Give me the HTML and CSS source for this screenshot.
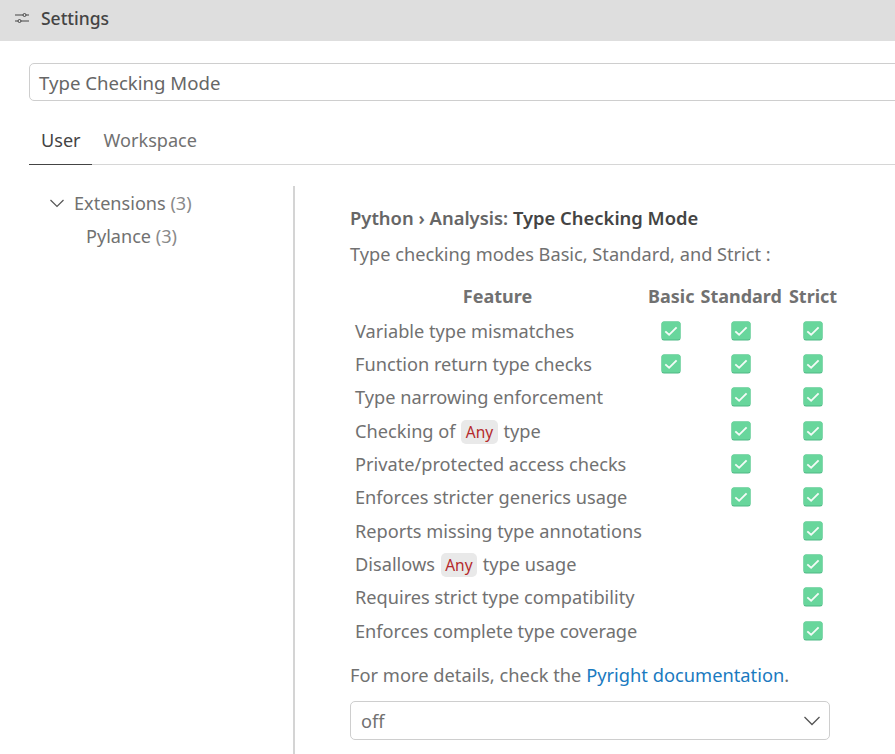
FILE: index.html
```html
<!DOCTYPE html>
<html lang="en">

<head>
    <meta charset="UTF-8" />
    <title>Settings</title>
    <link rel="stylesheet" href="styles.css">
</head>

<body>
    <svg class="defs" width="0" height="0">
        <symbol id="check" viewBox="0 0 20 20">
            <rect x="0.5" y="0.5" width="19" height="19" rx="2.5" fill="#4fb985" />
            <rect x="0.5" y="0.5" width="19" height="18" rx="2.5" fill="#68d69c" />
            <path d="M4.3 10.400l3.800 3.400 7.500-7.500" fill="none" stroke="#f4fbf7" stroke-width="1.9" />
        </symbol>
    </svg>

    <div class="titlebar">
        <svg class="settings-icon" width="16" height="16" viewBox="0 0 16 16" fill="none" stroke="#444" stroke-width="1">
            <path d="M1 5h8M12 5h3M1 11h3M7 11h8" />
            <circle cx="10.5" cy="5" r="1.5" />
            <circle cx="5.5" cy="11" r="1.5" />
        </svg>
        <span>Settings</span>
    </div>

    <div class="content">
        <div class="search">Type Checking Mode</div>

        <div class="tabs">
            <div class="tab active">User</div>
            <div class="tab">Workspace</div>
        </div>

        <div class="columns">
            <div class="tree">
                <div class="tree-row">
                    <svg width="16" height="16" viewBox="0 0 16 16" fill="none" stroke="#555" stroke-width="1.2">
                        <path d="M1.5 5l6.5 6.500 6.500-6.500" />
                    </svg>
                    <span>Extensions <span class="count">(3)</span></span>
                </div>
                <div class="tree-row child">Pylance <span class="count">(3)</span></div>
            </div>

            <div class="setting">
                <div class="setting-title">Python › Analysis: <b>Type Checking Mode</b></div>
                <p class="desc">Type checking modes Basic, Standard, and Strict :</p>

                <table>
                    <thead>
                        <tr>
                            <th class="feature">Feature</th>
                            <th>Basic</th>
                            <th>Standard</th>
                            <th>Strict</th>
                        </tr>
                    </thead>
                    <tbody>
                        <tr>
                            <td>Variable type mismatches</td>
                            <td><svg class="tick"><use href="#check" /></svg></td>
                            <td><svg class="tick"><use href="#check" /></svg></td>
                            <td><svg class="tick"><use href="#check" /></svg></td>
                        </tr>
                        <tr>
                            <td>Function return type checks</td>
                            <td><svg class="tick"><use href="#check" /></svg></td>
                            <td><svg class="tick"><use href="#check" /></svg></td>
                            <td><svg class="tick"><use href="#check" /></svg></td>
                        </tr>
                        <tr>
                            <td>Type narrowing enforcement</td>
                            <td></td>
                            <td><svg class="tick"><use href="#check" /></svg></td>
                            <td><svg class="tick"><use href="#check" /></svg></td>
                        </tr>
                        <tr>
                            <td>Checking of <code>Any</code> type</td>
                            <td></td>
                            <td><svg class="tick"><use href="#check" /></svg></td>
                            <td><svg class="tick"><use href="#check" /></svg></td>
                        </tr>
                        <tr>
                            <td>Private/protected access checks</td>
                            <td></td>
                            <td><svg class="tick"><use href="#check" /></svg></td>
                            <td><svg class="tick"><use href="#check" /></svg></td>
                        </tr>
                        <tr>
                            <td>Enforces stricter generics usage</td>
                            <td></td>
                            <td><svg class="tick"><use href="#check" /></svg></td>
                            <td><svg class="tick"><use href="#check" /></svg></td>
                        </tr>
                        <tr>
                            <td>Reports missing type annotations</td>
                            <td></td>
                            <td></td>
                            <td><svg class="tick"><use href="#check" /></svg></td>
                        </tr>
                        <tr>
                            <td>Disallows <code>Any</code> type usage</td>
                            <td></td>
                            <td></td>
                            <td><svg class="tick"><use href="#check" /></svg></td>
                        </tr>
                        <tr>
                            <td>Requires strict type compatibility</td>
                            <td></td>
                            <td></td>
                            <td><svg class="tick"><use href="#check" /></svg></td>
                        </tr>
                        <tr>
                            <td>Enforces complete type coverage</td>
                            <td></td>
                            <td></td>
                            <td><svg class="tick"><use href="#check" /></svg></td>
                        </tr>
                    </tbody>
                </table>

                <p class="more">For more details, check the <a href="#">Pyright documentation</a>.</p>

                <div class="select">
                    <span>off</span>
                    <svg width="18" height="18" viewBox="0 0 18 18" fill="none" stroke="#555" stroke-width="1.300">
                        <path d="M1.500 5l7.500 7.500 7.500-7.500" />
                    </svg>
                </div>
            </div>
        </div>
    </div>
</body>

</html>
```

FILE: styles.css
```css
html,
body {
    height: 100%;
}

body {
    margin: 0;
    overflow: hidden;
    background-color: #fff;
    color: #717171;
    font-family: "Noto Sans", "Open Sans", sans-serif;
    font-size: 18.2px;
}

.defs {
    position: absolute;
}

.titlebar {
    display: flex;
    align-items: center;
    gap: 11px;
    height: 41px;
    padding: 0 0 6px 14px;
    box-sizing: border-box;
    background-color: #dedede;
    color: #444;
    font-size: 17.5px;
    font-weight: 500;
}

.content {
    padding: 22px 0 0 29px;
}

.search {
    width: 900px;
    height: 38px;
    box-sizing: border-box;
    padding: 0 9px;
    border: 1px solid #cecece;
    border-radius: 5px;
    font-size: 18.6px;
    line-height: 38px;
    color: #666;
}

.tabs {
    display: flex;
    margin-top: 20px;
    height: 43px;
    border-bottom: 1px solid #d6d6d6;
    font-size: 18.1px;
}

.tab {
    padding: 0 12px;
    line-height: 38px;
    height: 44px;
    box-sizing: border-box;
}

.tab.active {
    padding-right: 11px;
    color: #444;
    border-bottom: 1px solid #444;
}

.columns {
    display: flex;
    margin-top: 21px;
}

.tree {
    width: 264px;
    flex-shrink: 0;
    font-size: 18.1px;
}

.tree-row {
    display: flex;
    align-items: center;
    gap: 9px;
    height: 33px;
    padding-left: 20px;
}

.tree-row.child {
    display: block;
    padding-left: 57px;
    line-height: 34px;
}

.count {
    color: #8a8a8a;
}

.setting {
    flex: 1;
    height: 568px;
    padding: 19px 0 0 55px;
    border-left: 2px solid #d4d4d4;
}

.setting-title {
    line-height: 26px;
    font-size: 18.4px;
    font-weight: 600;
    color: #666;
}

.setting-title b {
    color: #444;
    font-weight: 600;
}

.desc {
    margin: 10px 0 0;
    line-height: 26px;
}

table {
    margin-top: 11px;
    border-collapse: collapse;
}

th,
td {
    height: 33.35px;
    padding: 0 3px;
    text-align: center;
}

th {
    height: 36px;
    font-size: 18px;
    font-weight: 700;
}

th:last-child,
td:last-child {
    padding-left: 4px;
}

td:first-child {
    padding-left: 5px;
    text-align: left;
    white-space: nowrap;
}

td:first-child,
th.feature {
    width: 287px;
}

.tick {
    display: block;
    width: 20px;
    height: 20px;
    margin: 0 auto;
}

code {
    margin: 0 1px;
    padding: 1px 4.5px;
    border-radius: 5px;
    background-color: #e9e9e9;
    color: #b5292c;
    font-family: inherit;
    font-size: 15.500px;
}

.more {
    margin: 15px 0 0;
    font-size: 18.3px;
    line-height: 26px;
}

.more a {
    color: #1a7abf;
    text-decoration: none;
}

.select {
    display: flex;
    align-items: center;
    justify-content: space-between;
    width: 480px;
    height: 39px;
    box-sizing: border-box;
    margin-top: 13px;
    padding: 1px 8px 0 10px;
    border: 1px solid #cecece;
    border-radius: 5px;
}
```
